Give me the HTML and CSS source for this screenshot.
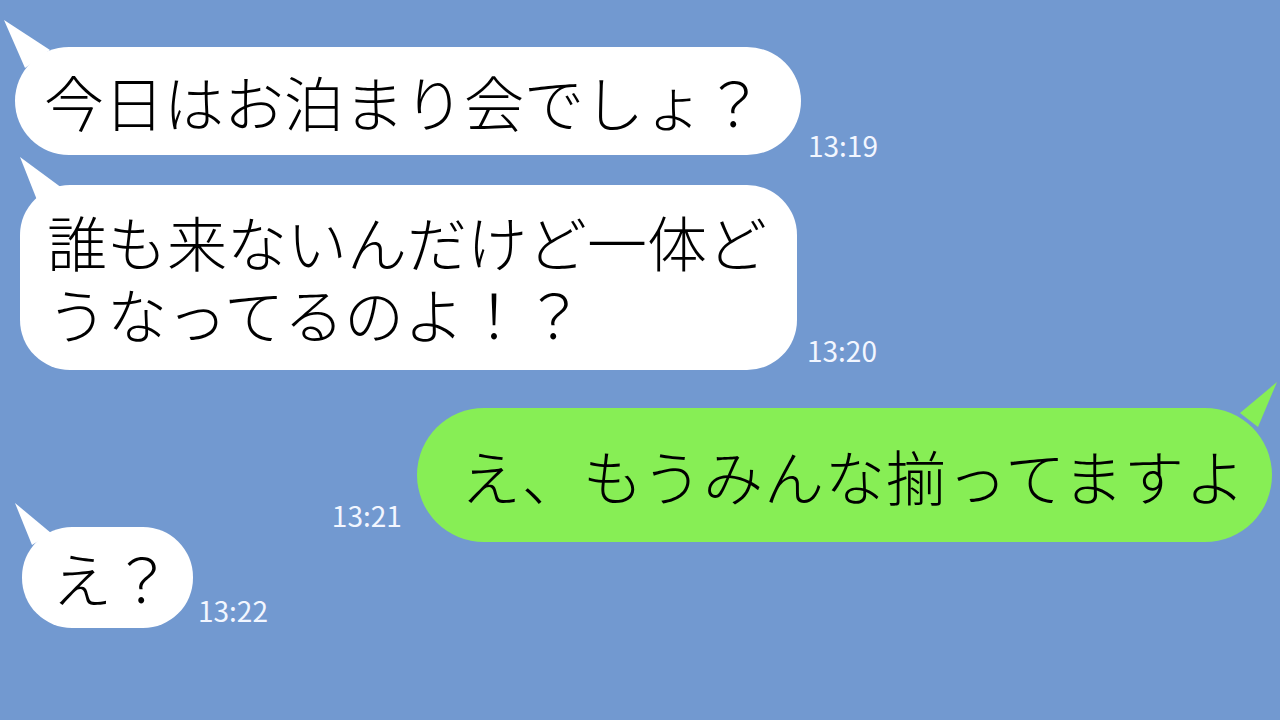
FILE: index.html
```html
<!DOCTYPE html>
<html lang="ja">
<head>
  <meta charset="UTF-8">
  <meta name="viewport" content="width=device-width, initial-scale=1.0">
  <title>トーク</title>
  <link rel="stylesheet" href="styles.css">
</head>
<body>

  <div class="chat">
    <!-- 相手 -->
    <div class="row row-first">
      <div class="bubble bubble-one">今日はお泊まり会でしょ？</div>
      <span class="time time-one">13:19</span>
    </div>

    <div class="row row-second">
      <div class="bubble bubble-two">誰も来ないんだけど一体ど<br>うなってるのよ！？</div>
      <span class="time time-two">13:20</span>
    </div>

    <!-- 自分 -->
    <div class="row row-mine">
      <span class="time time-three">13:21</span>
      <div class="bubble mine">え、もうみんな揃ってますよ</div>
    </div>

    <div class="row row-last">
      <div class="bubble bubble-four">え？</div>
      <span class="time time-four">13:22</span>
    </div>
  </div>

</body>
</html>
```

FILE: styles.css
```css
body {
  margin: 0;
  background-color: #7299d0;
  font-family: "Noto Sans CJK JP", "Noto Sans", sans-serif;
  color: #000;
  height: 720px;
  overflow: hidden;
}
.chat {
  padding-top: 47px;
  display: flex;
  flex-direction: column;
}
.row {
  display: flex;
  align-items: flex-end;
}
.row-first {
  padding-left: 15px;
}
.row-second {
  margin-top: 30px;
  padding-left: 20px;
}
.row-mine {
  margin-top: 38px;
  justify-content: flex-end;
  padding-right: 8px;
}
.row-last {
  margin-top: -15px;
  padding-left: 22px;
}

.bubble {
  position: relative;
  background-color: #fff;
  font-size: 60px;
  font-weight: 300;
  line-height: 72px;
  white-space: nowrap;
}
.bubble::before {
  content: "";
  position: absolute;
  background-color: inherit;
}
.bubble-one {
  padding: 18px 37px 18px 29px;
  border-radius: 54px;
}
.bubble-one::before {
  left: -11px;
  top: -27px;
  width: 50px;
  height: 50px;
  clip-path: polygon(0 0, 21px 48px, 46px 30px);
}
.bubble-two {
  padding: 20px 30px 21px 27px;
  border-radius: 50px;
}
.bubble-two::before {
  left: 0;
  top: -28px;
  width: 45px;
  height: 48px;
  clip-path: polygon(0 0, 17px 43px, 42px 31px);
}
.bubble-four {
  padding: 14px 21px 15px 30px;
  border-radius: 50px;
}
.bubble-four::before {
  left: -7px;
  top: -24px;
  width: 40px;
  height: 45px;
  clip-path: polygon(0 0, 17px 42px, 36px 30px);
}
.mine {
  background-color: #87ee55;
  letter-spacing: 1px;
  padding: 31px 26px 31px 44px;
  border-radius: 67px;
}
.mine::before {
  right: -5px;
  top: -26px;
  width: 45px;
  height: 50px;
  clip-path: polygon(45px 0, 8px 31px, 26px 45px);
}

.time {
  color: #f2f6ff;
  font-size: 28px;
  line-height: 28px;
}
.time-one {
  margin-left: 7px;
  margin-bottom: -4px;
}
.time-two {
  margin-left: 10px;
  margin-bottom: 6px;
}
.time-three {
  margin-right: 15px;
  margin-bottom: 13px;
}
.time-four {
  margin-left: 5px;
  margin-bottom: 4px;
}
```
